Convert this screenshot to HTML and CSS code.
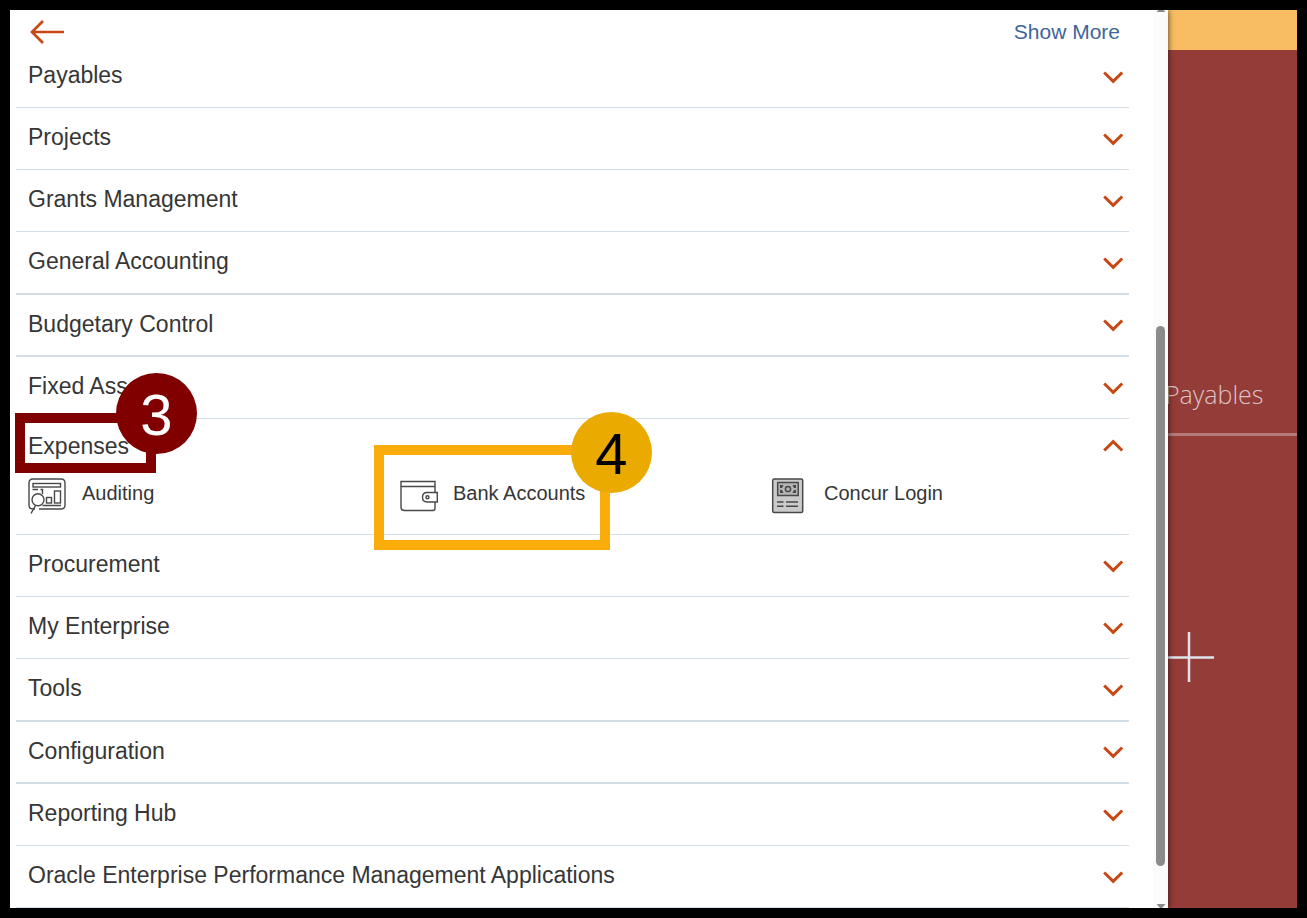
FILE: index.html
```html
<!DOCTYPE html>
<html lang="en">
<head>
    <meta charset="UTF-8">
    <meta name="viewport" content="width=device-width, initial-scale=1.0">
    <title>Navigator</title>
    <link rel="stylesheet" href="styles.css">
</head>
<body>
    <svg class="sprite" aria-hidden="true">
        <symbol id="chevron" viewBox="0 0 20 14">
            <path d="M1.200 2.500 L10.200 11.300 L19.200 2.500" fill="none" stroke="#c74814" stroke-width="3"/>
        </symbol>
    </svg>

    <div class="stage">
        <nav class="drawer">
            <div class="menu">
                <header class="menu-header">
                    <button class="back" aria-label="Back">
                        <svg width="34" height="24" viewBox="0 0 34 24" fill="none" stroke="#c74814" stroke-width="2.7">
                            <path d="M1.500 12 H34 M13 1 L2 12 L13 23"/>
                        </svg>
                    </button>
                    <a class="show-more" href="#">Show More</a>
                </header>

                <button class="row"><span>Payables</span><svg class="chevron"><use href="#chevron"/></svg></button>
                <button class="row"><span>Projects</span><svg class="chevron"><use href="#chevron"/></svg></button>
                <button class="row"><span>Grants Management</span><svg class="chevron"><use href="#chevron"/></svg></button>
                <button class="row row-end"><span>General Accounting</span><svg class="chevron"><use href="#chevron"/></svg></button>
                <button class="row row-thick"><span>Budgetary Control</span><svg class="chevron"><use href="#chevron"/></svg></button>
                <button class="row"><span>Fixed Assets</span><svg class="chevron"><use href="#chevron"/></svg></button>

                <section class="group">
                    <button class="row row-open" aria-expanded="true"><span>Expenses</span><svg class="chevron up"><use href="#chevron"/></svg></button>
                    <div class="items">
                        <a class="item" href="#">
                            <svg class="icon" viewBox="0 0 38 40" fill="none" stroke="#484848" stroke-width="1.4">
                                <path d="M7 33 H5 Q1 33 1 29 V7 Q1 3 5 3 H33 Q37 3 37 7 V29 Q37 33 33 33 H11"/>
                                <rect x="5" y="7.5" width="27.5" height="3.5"/>
                                <path d="M4.500 13.500 H10 M12.500 13.500 H14.500 V18 M14.500 29.500 H33"/>
                                <circle cx="10" cy="23.700" r="6" fill="#fff"/>
                                <path d="M7.500 29.500 L3 37.500"/>
                                <rect x="18.500" y="21.500" width="5" height="5.500"/>
                                <rect x="26.500" y="15" width="6" height="12"/>
                            </svg>
                            <span>Auditing</span>
                        </a>
                        <a class="item" href="#">
                            <svg class="icon" viewBox="0 0 38 40" fill="none" stroke="#484848" stroke-width="1.4">
                                <path d="M36 16.500 V5.500 H2 V31 Q2 34.500 5.500 34.500 H34 Q36 34.500 36 32 V26"/>
                                <path d="M2 10.500 H36"/>
                                <path d="M38.300 16.500 H28 Q23.500 16.500 23.500 21.300 Q23.500 26 28 26 H38.300 Z" fill="#fff"/>
                                <circle cx="28.500" cy="21.300" r="1.500"/>
                            </svg>
                            <span>Bank Accounts</span>
                        </a>
                        <a class="item" href="#">
                            <svg class="icon" viewBox="0 0 38 40" fill="none" stroke="#484848" stroke-width="1.5">
                                <rect x="2.700" y="3" width="30" height="33.500" rx="1.500" fill="#cacaca"/>
                                <rect x="7.700" y="6.500" width="20.500" height="13" fill="#b5b5b5"/>
                                <circle cx="18" cy="13" r="2.600"/>
                                <path d="M10 9 h3.500 l-1.500 3 h-2 Z M10 17 h3.500 l-1.500 -3 h-2 Z M26 9 h-3.500 l1.500 3 h2 Z M26 17 h-3.500 l1.500 -3 h2 Z" fill="#484848" stroke="none"/>
                                <path d="M7 26 H13.500 M16 26 H28 M7 30.300 H13.500 M16 30.300 H28"/>
                            </svg>
                            <span>Concur Login</span>
                        </a>
                    </div>
                    <div class="mark mark-3"></div>
                    <div class="step step-3">3</div>
                    <div class="mark mark-4"></div>
                    <div class="step step-4">4</div>
                </section>

                <button class="row"><span>Procurement</span><svg class="chevron"><use href="#chevron"/></svg></button>
                <button class="row"><span>My Enterprise</span><svg class="chevron"><use href="#chevron"/></svg></button>
                <button class="row row-end"><span>Tools</span><svg class="chevron"><use href="#chevron"/></svg></button>
                <button class="row row-thick"><span>Configuration</span><svg class="chevron"><use href="#chevron"/></svg></button>
                <button class="row"><span>Reporting Hub</span><svg class="chevron"><use href="#chevron"/></svg></button>
                <button class="row"><span>Oracle Enterprise Performance Management Applications</span><svg class="chevron"><use href="#chevron"/></svg></button>
            </div>

            <div class="scrollbar">
                <svg width="10" height="4" viewBox="0 0 10 4"><path d="M2.500 0 H7.500 L9.500 2 H0.500 Z" fill="#8b8b8b"/></svg>
                <div class="thumb"></div>
                <svg class="down" width="10" height="4" viewBox="0 0 10 4"><path d="M0.500 0 H9.500 L6 4 H4 Z" fill="#8b8b8b"/></svg>
            </div>
        </nav>

        <aside class="page">
            <div class="page-bar"></div>
            <div class="tile">Payables</div>
            <div class="plus">
                <svg width="52" height="50" viewBox="0 0 52 50" stroke="#e0e3ec" stroke-width="2.500"><path d="M26 0 V50 M0 25.500 H51"/></svg>
            </div>
        </aside>
    </div>
</body>
</html>
```

FILE: styles.css
```css
* {
    box-sizing: border-box;
}
body {
    margin: 0;
    padding: 10px;
    background-color: #000;
    font-family: "Liberation Sans", Arial, sans-serif;
    color: #363636;
}
.sprite {
    position: absolute;
    width: 0;
    height: 0;
}
.stage {
    display: flex;
    min-height: calc(100vh - 20px);
    overflow: hidden;
}
.drawer {
    flex: 1;
    display: flex;
    background-color: #fff;
    box-shadow: 0 0 6px rgba(0, 0, 0, 0.7);
    z-index: 1;
}
.menu {
    flex: 1;
    padding: 0 24px 0 6px;
}
.menu-header {
    display: flex;
    justify-content: space-between;
    align-items: center;
    height: 36px;
    padding: 8px 9px 0 14px;
}
button {
    border: none;
    background: none;
    padding: 0;
    font-family: inherit;
    color: inherit;
    text-align: left;
    cursor: pointer;
}
.back svg {
    display: block;
}
.show-more {
    font-size: 21px;
    color: #41659a;
    text-decoration: none;
}
.row {
    display: flex;
    justify-content: space-between;
    align-items: center;
    width: 100%;
    height: 62px;
    padding: 0 6px 0 12px;
    border-bottom: 1px solid #d3dde5;
    font-size: 23px;
    line-height: 26px;
}
.row span {
    padding-bottom: 3px;
}
.row-end {
    height: 63px;
    border-bottom-width: 2px;
}
.row-thick {
    border-bottom-width: 2px;
}
.row-open {
    height: 54px;
    border-bottom: none;
}
.row-open span {
    padding-bottom: 0;
}
.chevron {
    width: 20px;
    height: 14px;
}
.up {
    transform: scaleY(-1);
}
.group {
    position: relative;
    border-bottom: 1px solid #d3dde5;
}
.items {
    display: grid;
    grid-template-columns: repeat(3, 1fr);
    height: 61px;
    padding-top: 3px;
}
.item {
    display: flex;
    align-items: center;
    gap: 16px;
    height: 40px;
    padding-left: 12px;
    font-size: 20px;
    color: inherit;
    text-decoration: none;
}
.item span {
    padding-bottom: 5px;
}
.icon {
    width: 38px;
    height: 40px;
    overflow: visible;
}

/* numbered callouts */
.mark {
    position: absolute;
    border: 10px solid #800000;
    pointer-events: none;
}
.mark-3 {
    left: -1px;
    top: -6px;
    width: 141px;
    height: 60px;
}
.mark-4 {
    left: 358px;
    top: 26px;
    width: 236px;
    height: 105px;
    border-color: #f9ac0a;
}
.step {
    position: absolute;
    width: 81px;
    height: 81px;
    border-radius: 50%;
    font-size: 58px;
    line-height: 84px;
    text-align: center;
}
.step-3 {
    left: 100px;
    top: -46px;
    background-color: #800000;
    color: #fff;
}
.step-4 {
    left: 555px;
    top: -7px;
    background-color: #eaaa00;
    color: #000;
}

.scrollbar {
    display: grid;
    grid-template-rows: 316fr 540fr 42fr;
    justify-items: center;
    width: 15px;
    background-color: #fbfbfb;
}
.scrollbar svg {
    display: block;
}
.scrollbar .down {
    align-self: end;
}
.thumb {
    width: 9px;
    border-radius: 5px;
    background-color: #8b8b8b;
}

.page {
    width: 129px;
    background-color: #943c38;
}
.page-bar {
    height: 40px;
    background-color: #f8bd62;
}
.tile {
    display: flex;
    align-items: flex-end;
    height: 386px;
    margin-left: -3px;
    padding-bottom: 22px;
    border-bottom: 3px solid #b57b7b;
    font-family: "Open Sans", sans-serif;
    font-weight: 300;
    font-size: 25px;
    color: #dcc3c6;
}
.plus {
    margin: 196px 0 0 -5px;
}
```
